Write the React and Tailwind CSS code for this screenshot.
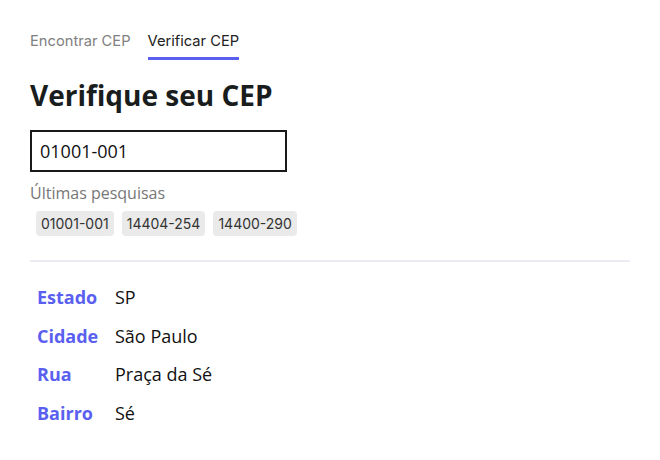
import React, { useState } from "react";

const rows = [
  { label: "Estado", value: "SP" },
  { label: "Cidade", value: "São Paulo" },
  { label: "Rua", value: "Praça da Sé" },
  { label: "Bairro", value: "Sé" },
];

const recent = ["01001-001", "14404-254", "14400-290"];

export default function App() {
  const [cep, setCep] = useState("01001-001");
  const [tab, setTab] = useState("verificar");

  return (
    <div className="min-h-screen w-full bg-white px-[30px] pt-[30px] font-['Open_Sans',sans-serif] text-[#111]">
      <div className="flex gap-[17px] font-['Inter',sans-serif] text-[14.7px]">
        <button
          onClick={() => setTab("encontrar")}
          className={`pb-[5px] border-b-[3px] ${tab === "encontrar" ? "border-[#5a5ff0] text-[#222]" : "border-transparent text-[#808080]"}`}
        >
          Encontrar CEP
        </button>
        <button
          onClick={() => setTab("verificar")}
          className={`pb-[5px] border-b-[3px] ${tab === "verificar" ? "border-[#5a5ff0] text-[#222]" : "border-transparent text-[#808080]"}`}
        >
          Verificar CEP
        </button>
      </div>

      <h1 className="mt-[16px] text-[28px] font-bold leading-[38px] text-[#1a1d1d]">Verifique seu CEP</h1>

      <input
        value={cep}
        onChange={(e) => setCep(e.target.value)}
        className="mt-[16px] block h-[42px] w-[257px] border-2 border-[#1a1a1a] px-[8px] text-[18px] text-[#111] outline-none"
      />

      <p className="mt-[9px] text-[16px] leading-[24px] text-[#777]">Últimas pesquisas</p>
      <div className="mt-[6px] flex gap-[8px] pl-[6px] font-['Inter',sans-serif]">
        {recent.map((c) => (
          <button
            key={c}
            onClick={() => setCep(c)}
            className="h-[25px] rounded-[4px] bg-[#eaeaea] px-[5px] text-[14px] text-[#333]"
          >
            {c}
          </button>
        ))}
      </div>

      <hr className="mt-[24px] border-0 border-t-2 border-[#efebf5]" />

      <div className="mt-[23px] flex flex-col gap-[13px] pl-[7px]">
        {rows.map((r) => (
          <div key={r.label} className="flex items-center text-[18px] leading-[25.5px]">
            <span className="w-[78px] font-bold text-[#5a5ff0]">{r.label}</span>
            <span className="text-[#111]">{r.value}</span>
          </div>
        ))}
      </div>
    </div>
  );
}
